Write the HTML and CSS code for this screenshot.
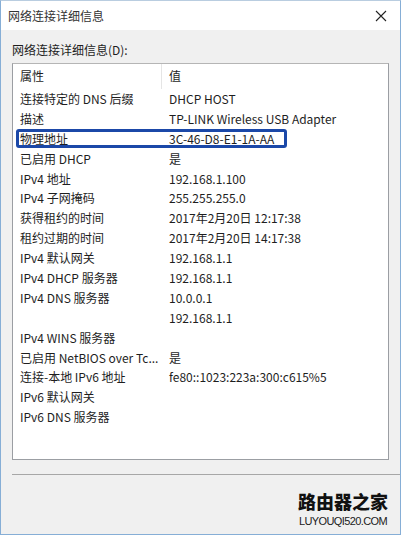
FILE: index.html
```html
<!DOCTYPE html>
<html>
<head>
<meta charset="utf-8">
<link rel="stylesheet" href="styles.css">
</head>
<body>
<div class="window">
  <div class="titlebar">
    <span class="title">网络连接详细信息</span>
    <svg class="close" width="12" height="12" viewBox="0 0 12 12"><path d="M1 1L11 11M11 1L1 11" stroke="#222" stroke-width="1.1" fill="none"/></svg>
  </div>
  <div class="content">
    <div class="label">网络连接详细信息(D):</div>
    <div class="listbox">
      <div class="row head"><div class="k">属性</div><div class="v">值</div></div>
      <div class="row"><div class="k">连接特定的 DNS 后缀</div><div class="v">DHCP HOST</div></div>
      <div class="row"><div class="k">描述</div><div class="v">TP-LINK Wireless USB Adapter</div></div>
      <div class="row mark"><div class="k">物理地址</div><div class="v">3C-46-D8-E1-1A-AA</div></div>
      <div class="row"><div class="k">已启用 DHCP</div><div class="v">是</div></div>
      <div class="row"><div class="k">IPv4 地址</div><div class="v">192.168.1.100</div></div>
      <div class="row"><div class="k">IPv4 子网掩码</div><div class="v">255.255.255.0</div></div>
      <div class="row"><div class="k">获得租约的时间</div><div class="v">2017年2月20日 12:17:38</div></div>
      <div class="row"><div class="k">租约过期的时间</div><div class="v">2017年2月20日 14:17:38</div></div>
      <div class="row"><div class="k">IPv4 默认网关</div><div class="v">192.168.1.1</div></div>
      <div class="row"><div class="k">IPv4 DHCP 服务器</div><div class="v">192.168.1.1</div></div>
      <div class="row"><div class="k">IPv4 DNS 服务器</div><div class="v">10.0.0.1</div></div>
      <div class="row"><div class="k"></div><div class="v">192.168.1.1</div></div>
      <div class="row"><div class="k">IPv4 WINS 服务器</div><div class="v"></div></div>
      <div class="row"><div class="k">已启用 NetBIOS over Tc...</div><div class="v">是</div></div>
      <div class="row"><div class="k">连接-本地 IPv6 地址</div><div class="v">fe80::1023:223a:300:c615%5</div></div>
      <div class="row"><div class="k">IPv6 默认网关</div><div class="v"></div></div>
      <div class="row"><div class="k">IPv6 DNS 服务器</div><div class="v"></div></div>
    </div>
  </div>
  <div class="footer">
    <div class="brand">
      <div class="brand-cn">路由器之家</div>
      <div class="brand-en">LUYOUQI520.COM</div>
    </div>
  </div>
</div>
</body>
</html>
```
FILE: styles.css
```css
html, body {
  margin: 0;
  padding: 0;
  background: #f0f0f0;
}
body {
  font-family: "Noto Sans CJK SC", "Noto Sans", sans-serif;
  font-size: 12px;
  color: #1e1e1e;
}
.window {
  box-sizing: border-box;
  width: 401px;
  height: 535px;
  border: 1px solid #86aed6;
  border-top-color: #b9cde0;
  background: #f0f0f0;
  display: flex;
  flex-direction: column;
}
.titlebar {
  height: 29px;
  background: #ffffff;
  display: flex;
  align-items: center;
  justify-content: space-between;
  padding: 0 13px 0 7px;
  flex: none;
}
.title {
  color: #333;
  font-size: 12px;
}
.close {
  display: block;
}
.content {
  padding: 12px 11px 0 11px;
}
.label {
  height: 21px;
  line-height: 16px;
}
.listbox {
  background: #fff;
  border: 1px solid #9b9ea3;
  border-top-color: #b5b5b5;
  height: 397px;
  box-sizing: border-box;
  width: 377px;
}
.row {
  display: grid;
  grid-template-columns: 149px 1fr;
  height: 19.9px;
  line-height: 19.9px;
  position: relative;
}
.row .k {
  padding-left: 7px;
  white-space: nowrap;
  overflow: hidden;
}
.row .v {
  padding-left: 7px;
  white-space: nowrap;
}
.row.head {
  height: 25px;
  line-height: 24px;
}
.row.head .k {
  border-right: 1px solid #e5e5e5;
}
.row.mark::after {
  content: "";
  position: absolute;
  left: 3px;
  top: 0;
  width: 271px;
  height: 19px;
  box-sizing: border-box;
  border: 3px solid #1b48a8;
  border-radius: 3px;
}
.footer {
  flex: 1;
  margin: 14px 0 0 11px;
  border-top: 1px solid #a7a7a7;
  display: flex;
  justify-content: flex-end;
  align-items: flex-end;
  padding: 0 12px 7px 0;
}
.brand {
  display: flex;
  flex-direction: column;
  align-items: center;
  gap: 6px;
}
.brand-cn {
  font-family: "Noto Sans CJK SC", sans-serif;
  font-weight: 900;
  font-size: 18px;
  line-height: 18px;
  color: #111;
}
.brand-en {
  font-family: "Liberation Sans", Arial, sans-serif;
  font-size: 11px;
  line-height: 11px;
  letter-spacing: -0.6px;
  color: #222;
}
```
